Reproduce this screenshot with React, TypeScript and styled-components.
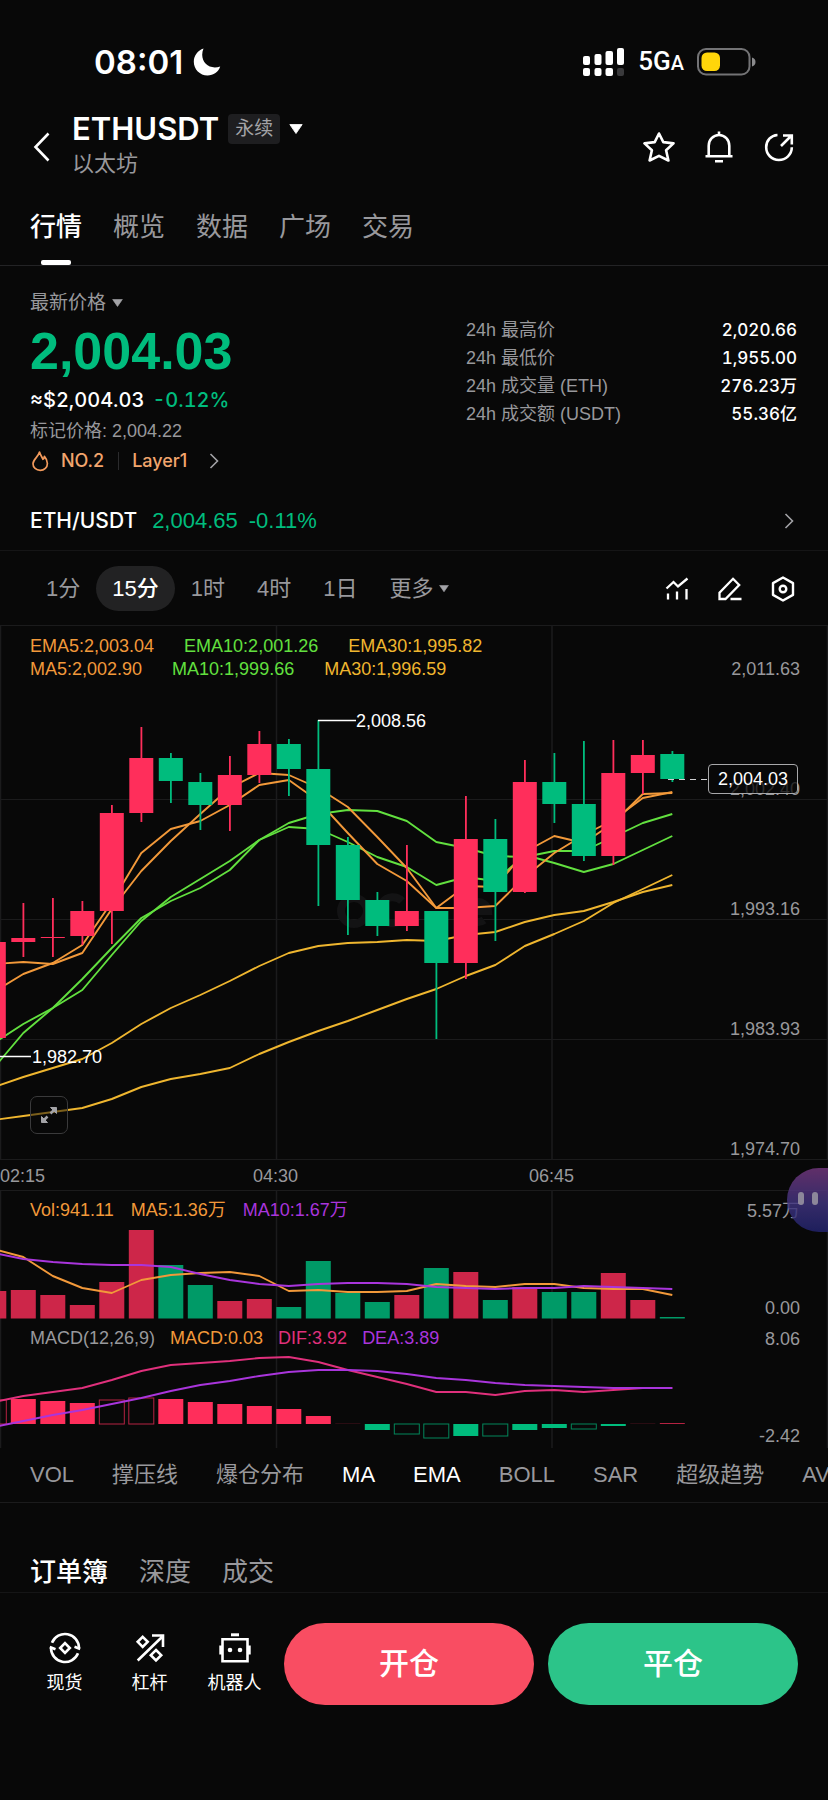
import React from "react";
import styled, { createGlobalStyle } from "styled-components";

const UP = "#ff2e5b";
const DOWN = "#00bc7d";
const ORANGE = "#f2993a";
const GREEN = "#62e03f";
const YELLOW = "#efb62f";
const PURPLE = "#a935dc";
const PINK = "#e0307c";
const GRID = "#1b1b1c";
const MUTED = "#98989c";

const DISPLAY = `Inter, "Noto Sans CJK SC", sans-serif`;

const GlobalStyle = createGlobalStyle`
  *, *::before, *::after { box-sizing: border-box; }
  body {
    margin: 0;
    background: #080808;
    color: #fff;
    font-family: "Liberation Sans", "Noto Sans CJK SC", sans-serif;
    -webkit-font-smoothing: antialiased;
  }
  button {
    font: inherit;
    color: inherit;
    background: none;
    border: 0;
    padding: 0;
    cursor: pointer;
  }
  a { color: inherit; text-decoration: none; }
  svg { display: block; flex: none; }
`;

const Page = styled.main`
  display: flex;
  flex-direction: column;
  min-height: 100vh;
  overflow: hidden;
  padding-bottom: 94px;
`;

/* ---------- status bar ---------- */

const StatusBar = styled.div`
  display: flex;
  align-items: center;
  justify-content: space-between;
  padding: 42px 72px 14px 94px;
  height: 96px;
`;

const StatusGroup = styled.div<{ $gap: number }>`
  display: flex;
  align-items: center;
  gap: ${(p) => p.$gap}px;
`;

const Clock = styled.span`
  font-family: ${DISPLAY};
  font-size: 33px;
  line-height: 40px;
  font-weight: 600;
`;

const Network = styled.span`
  font-family: Roboto, sans-serif;
  font-size: 26px;
  line-height: 32px;
  font-weight: 500;
  small { font-size: 20px; }
`;

/* ---------- header ---------- */

const Header = styled.header`
  display: flex;
  align-items: flex-end;
  padding: 12px 33px 0 31px;
`;

const BackButton = styled.button`
  width: 41px;
  padding-bottom: 16px;
`;

const PairBlock = styled.div`
  flex: 1;
  display: flex;
  flex-direction: column;
`;

const PairButton = styled.button`
  display: flex;
  align-items: center;
  gap: 9px;
  height: 42px;
`;

const PairName = styled.span`
  font-family: ${DISPLAY};
  font-size: 31px;
  line-height: 40px;
  font-weight: 600;
`;

const Badge = styled.span`
  padding: 0 7px;
  border-radius: 4px;
  background: #1e1e20;
  color: #a3a3a7;
  font-size: 19px;
  line-height: 30px;
`;

const CoinName = styled.span`
  color: ${MUTED};
  font-size: 22px;
  line-height: 28px;
`;

const HeaderActions = styled.div`
  display: flex;
  gap: 28px;
  padding-bottom: 15px;
`;

/* ---------- tabs ---------- */

const Tabs = styled.nav<{ $line: string; $pad: string }>`
  display: flex;
  gap: 31px;
  padding: ${(p) => p.$pad};
  border-bottom: 1px solid ${(p) => p.$line};
`;

const Tab = styled.button<{ $active?: boolean; $bar?: boolean }>`
  position: relative;
  font-size: 26px;
  line-height: 36px;
  padding-bottom: ${(p) => (p.$bar ? 20 : 2)}px;
  font-weight: ${(p) => (p.$active ? 500 : 400)};
  color: ${(p) => (p.$active ? "#fff" : MUTED)};
  &::after {
    content: "";
    display: ${(p) => (p.$active && p.$bar ? "block" : "none")};
    position: absolute;
    left: calc(50% - 15px);
    bottom: 0;
    width: 30px;
    height: 5px;
    border-radius: 2px;
    background: #fff;
  }
`;

/* ---------- quote ---------- */

const Quote = styled.section`
  display: flex;
  justify-content: space-between;
  align-items: flex-start;
  padding: 21px 31px 0 30px;
`;

const QuoteMain = styled.div`
  display: flex;
  flex-direction: column;
  align-items: flex-start;
`;

const PriceKind = styled.button`
  display: flex;
  align-items: center;
  gap: 6px;
  color: ${MUTED};
  font-size: 19px;
  line-height: 32px;
`;

const LastPrice = styled.strong`
  color: ${DOWN};
  font-size: 52px;
  line-height: 64px;
  font-weight: 700;
`;

const FiatRow = styled.div`
  display: flex;
  gap: 8px;
  font-family: ${DISPLAY};
  font-size: 20px;
  line-height: 34px;
  font-weight: 500;
  font-variant-numeric: tabular-nums;
`;

const Change = styled.span`
  color: ${DOWN};
`;

const MarkPrice = styled.div`
  color: ${MUTED};
  font-size: 18px;
  line-height: 28px;
`;

const TagRow = styled.a`
  display: flex;
  align-items: center;
  color: #f2a56d;
  font-family: ${DISPLAY};
  font-size: 18px;
  line-height: 32px;
  font-weight: 500;
`;

const TagText = styled.span`
  margin-left: 11px;
`;

const TagDivider = styled.span`
  width: 1px;
  height: 18px;
  margin: 0 2px 0 14px;
  background: #2b2b2d;
`;

const TagArrow = styled.span`
  margin-left: 21px;
`;

const Stats = styled.dl`
  display: grid;
  grid-template-columns: auto auto;
  width: 331px;
  margin: 0;
  padding-top: 29px;
  font-size: 18px;
  line-height: 28px;
  dt { color: ${MUTED}; }
  dd {
    margin: 0;
    text-align: right;
    font-family: ${DISPLAY};
    font-size: 17px;
    font-weight: 500;
    font-variant-numeric: tabular-nums;
  }
`;

const SpotLink = styled.a`
  display: flex;
  align-items: center;
  gap: 11px;
  padding: 27px 33px 12px 30px;
  border-bottom: 1px solid #151516;
  font-size: 22px;
  line-height: 34px;
  b {
    margin-right: 4px;
    font-family: ${DISPLAY};
    font-size: 21px;
    font-weight: 500;
  }
  svg { margin-left: auto; }
`;

/* ---------- timeframe ---------- */

const Toolbar = styled.div`
  display: flex;
  align-items: center;
  justify-content: space-between;
  padding: 15px 33px 14px 30px;
`;

const Frames = styled.div`
  display: flex;
  align-items: center;
`;

const Frame = styled.button<{ $active?: boolean }>`
  display: flex;
  align-items: center;
  gap: 5px;
  height: 45px;
  padding: 0 16px;
  border-radius: 23px;
  font-size: 22px;
  line-height: 32px;
  font-weight: ${(p) => (p.$active ? 500 : 400)};
  color: ${(p) => (p.$active ? "#fff" : MUTED)};
  background: ${(p) => (p.$active ? "#222223" : "transparent")};
`;

const Tools = styled.div`
  display: flex;
  gap: 28px;
`;

/* ---------- chart ---------- */

const Chart = styled.section`
  position: relative;
`;

const Pane = styled.div<{ $height: number }>`
  position: relative;
  height: ${(p) => p.$height}px;
  > svg {
    width: 100%;
    height: 100%;
  }
`;

const Legend = styled.div<{ $gap: number; $top: number }>`
  position: absolute;
  top: ${(p) => p.$top}px;
  left: 30px;
  display: grid;
  grid-auto-rows: 23px;
  font-size: 18px;
  line-height: 23px;
  > div {
    display: flex;
    gap: ${(p) => p.$gap}px;
  }
`;

const LegendItem = styled.span<{ $color: string }>`
  color: ${(p) => p.$color};
`;

const PriceAxis = styled.div<{ $top: number; $pitch: number }>`
  position: absolute;
  top: ${(p) => p.$top}px;
  right: 28px;
  display: grid;
  grid-auto-rows: ${(p) => p.$pitch}px;
  color: ${MUTED};
  font-size: 18px;
  line-height: 24px;
  text-align: right;
`;

const CurrentPrice = styled.span`
  position: absolute;
  top: 139px;
  right: 30px;
  padding: 0 9px;
  border: 1px solid #a8a8aa;
  border-radius: 4px;
  background: rgba(8, 8, 8, 0.75);
  font-size: 18px;
  line-height: 28px;
`;

const Extreme = styled.span<{ $left: string; $top: number }>`
  position: absolute;
  left: ${(p) => p.$left};
  top: ${(p) => p.$top}px;
  font-size: 18px;
  line-height: 24px;
`;

const ExpandButton = styled.button`
  position: absolute;
  left: 30px;
  bottom: 26px;
  display: grid;
  place-items: center;
  width: 38px;
  height: 38px;
  border: 1px solid #3a3a3b;
  border-radius: 7px;
  background: rgba(8, 8, 8, 0.5);
`;

const TimeAxis = styled.div`
  display: grid;
  grid-template-columns: 1fr 1fr 1fr;
  height: 30px;
  color: ${MUTED};
  font-size: 18px;
  line-height: 32px;
  span + span { margin-left: -23px; }
`;

const Assistant = styled.button`
  position: absolute;
  right: 0;
  top: 543px;
  display: flex;
  align-items: center;
  gap: 8px;
  width: 41px;
  height: 64px;
  padding: 0 0 3px 11px;
  border-radius: 32px 0 0 32px;
  background: linear-gradient(#74387f, #40347f 55%, #23246f);
  opacity: 0.82;
`;

const Eye = styled.i`
  width: 6px;
  height: 13px;
  border-radius: 3px;
  background: #aaa3bb;
`;

/* ---------- indicators ---------- */

const Indicators = styled.nav`
  display: flex;
  gap: 38px;
  padding: 10px 0 10px 30px;
  border-bottom: 1px solid #1b1b1c;
  overflow: hidden;
`;

const Indicator = styled.button<{ $active?: boolean }>`
  flex: none;
  font-size: 22px;
  line-height: 34px;
  color: ${(p) => (p.$active ? "#fff" : MUTED)};
`;

/* ---------- bottom bar ---------- */

const BottomBar = styled.footer`
  display: flex;
  align-items: center;
  padding: 30px 30px 0 22px;
`;

const Shortcut = styled.button`
  display: flex;
  flex-direction: column;
  align-items: center;
  gap: 6px;
  width: 85px;
  font-size: 18px;
  line-height: 26px;
`;

const Actions = styled.div`
  flex: 1;
  display: grid;
  grid-template-columns: 1fr 1fr;
  gap: 14px;
  margin-left: 7px;
`;

const TradeButton = styled.button<{ $color: string }>`
  height: 82px;
  border-radius: 41px;
  background: ${(p) => p.$color};
  font-size: 30px;
  line-height: 40px;
  font-weight: 500;
`;

/* ---------- icons ---------- */

const Caret = ({ w, color }: { w: number; color: string }) => (
  <svg width={w} height={w * 0.7} viewBox="0 0 10 7">
    <path d="M.6.4h8.8L5 6.8z" fill={color} stroke={color} strokeWidth=".6" strokeLinejoin="round" />
  </svg>
);

const ChevronRight = () => (
  <svg width="12" height="18" viewBox="0 0 12 18" fill="none" stroke="#a3a3a7" strokeWidth="1.6">
    <path d="M2.5 2l7 7-7 7" />
  </svg>
);

const line = { fill: "none", stroke: "#fff", strokeWidth: 2.6 } as const;

const Moon = () => (
  <svg width="28" height="28" viewBox="0 0 28 28">
    <path d="M10.5.6C5 2.4.8 7.500.8 13.700.8 21.300 6.900 27.400 14.500 27.400c6 0 11-3.600 12.700-9-1.900.7-3.500 1-5.400 1C14.600 19.400 9.200 14 9.200 6.800 9.200 4.600 9.700 2.500 10.500.6z" fill="#fff" />
  </svg>
);

const Signal = () => (
  <svg width="42" height="30" viewBox="0 0 42 30" fill="#fff">
    <rect x="0" y="9" width="7" height="9" rx="2" />
    <rect x="11.500" y="7" width="7" height="11" rx="2" />
    <rect x="22.500" y="4" width="7.500" height="14" rx="2" />
    <rect x="34" y="1" width="7" height="17" rx="2" />
    <rect x="0" y="21" width="7" height="8" rx="2" />
    <rect x="11.500" y="21" width="7" height="8" rx="2" />
    <rect x="22.500" y="21" width="7.500" height="8" rx="2" />
    <rect x="34" y="21" width="7" height="8" rx="2" fill="#3a3a3c" />
  </svg>
);

const Battery = () => (
  <svg width="59" height="28" viewBox="0 0 59 28">
    <rect x="1" y="1" width="51.500" height="25.500" rx="8" fill="none" stroke="#737375" strokeWidth="2" />
    <rect x="4.500" y="4.500" width="18.500" height="18.500" rx="5.500" fill="#ffd60a" />
    <path d="M55 9.500c2.500.6 3.500 2.400 3.500 4.500s-1 3.900-3.500 4.500z" fill="#8a8a8c" />
  </svg>
);

const Star = () => (
  <svg width="32" height="32" viewBox="0 0 32 32" {...line} strokeLinejoin="round">
    <path d="M16 2.500l4.300 8.600 10.200 1.300-7.400 6.800 2.300 10.300L16 24.800l-9.400 4.700 2.300-10.300-7.400-6.800 10.200-1.300z" />
  </svg>
);

const Bell = () => (
  <svg width="32" height="32" viewBox="0 0 32 32" {...line}>
    <path d="M16 .6v4M5.700 25V14.700C5.700 8.800 10.200 4 16 4s10.300 4.800 10.300 10.700V25M2.500 25.200h27M12 30.200h8" />
  </svg>
);

const Share = () => (
  <svg width="32" height="32" viewBox="0 0 32 32" {...line}>
    <path d="M14.500 4C8 4.300 3.200 9.500 3.200 16.300 3.200 23.300 8.700 29 15.800 29c7.200 0 13-5.600 13-12.700M18 15L28 5M20 4.500h8.800v9" />
  </svg>
);

const IndicatorIcon = () => (
  <svg width="24" height="24" viewBox="0 0 24 24" {...line} strokeWidth="2.300">
    <path d="M1.500 11.500l7-6.500 4.500 4.500L22.500 1.500M3 16.500v6M12 14.500v8M21.500 12v10.500" />
  </svg>
);

const Pencil = () => (
  <svg width="26" height="24" viewBox="0 0 26 24" {...line} strokeWidth="2.300">
    <path d="M16 1.800l6.200 6.200L8.500 22H2.500v-6.200zM13.500 22h11" />
  </svg>
);

const Hexagon = () => (
  <svg width="24" height="26" viewBox="0 0 24 26" {...line} strokeWidth="2.400">
    <path d="M12 1.500l10 5.600v11.800l-10 5.600-10-5.600V7.100z" strokeLinejoin="round" />
    <circle cx="12" cy="13" r="3.300" />
  </svg>
);

const Flame = () => (
  <svg width="20" height="22" viewBox="0 0 20 22" fill="none" stroke="#f29a5c" strokeWidth="1.700" strokeLinejoin="round">
    <path d="M9.500 2c.8 3.200 2.600 4.700 3.400 7.300.9-.5 1.400-1.500 1.500-2.900 2.200 2.500 3 4.700 3 7 0 4.100-3.100 7-7.200 7S3 17.500 3 13.700C3 9.300 8.400 7 9.500 2z" />
  </svg>
);

const SpotIcon = () => (
  <svg width="32" height="32" viewBox="0 0 32 32" {...line}>
    <path d="M3 10.800A14 14 0 0 1 30 16M29 21.200A14 14 0 0 1 2 16" />
    <path d="M31.200 17L25.500 14.800M.8 15L6.500 17.200" />
    <path d="M16 11.200l4.800 4.800-4.800 4.800-4.800-4.800z" />
  </svg>
);

const LeverageIcon = () => (
  <svg width="32" height="32" viewBox="0 0 32 32" {...line}>
    <path d="M3.700 28.500L28.500 4.500M18 3.500H29V15M8.700 4.800l5 5-5 5-5-5zM22 18l5.200 5.200L22 28.400l-5.200-5.200z" />
  </svg>
);

const RobotIcon = () => (
  <svg width="32" height="32" viewBox="0 0 32 32" {...line}>
    <path d="M3.500 7.300h25v22h-25zM1.600 13.500v9M30.400 13.500v9" />
    <path d="M12 2.800h8" strokeWidth="3" />
    <circle cx="11" cy="18" r="2.300" fill="#fff" stroke="none" />
    <circle cx="21" cy="18" r="2.300" fill="#fff" stroke="none" />
  </svg>
);

/* ---------- chart data: all panes share one vertical scale ---------- */

const STEP = 29.5;
const xAt = (i: number) => -6.2 + STEP * i;

// [rising, high, body top, body bottom, low]
const candles: [number, number, number, number, number][] = [
  [1, 942, 942, 1038, 1038],
  [1, 903, 938, 942, 957],
  [1, 898, 937, 938, 957],
  [1, 901, 911, 936, 945],
  [1, 805, 813, 911, 944],
  [1, 727, 758, 813, 822],
  [0, 753, 758, 781, 803],
  [0, 773, 782, 805, 830],
  [1, 756, 775, 805, 831],
  [1, 731, 744, 775, 783],
  [0, 739, 744, 769, 796],
  [0, 720, 769, 845, 906],
  [0, 837, 845, 900, 935],
  [0, 892, 900, 926, 936],
  [1, 845, 911, 926, 931],
  [0, 911, 911, 963, 1039],
  [1, 796, 839, 963, 979],
  [0, 819, 839, 892, 941],
  [1, 760, 782, 892, 893],
  [0, 753, 782, 804, 823],
  [0, 741, 804, 856, 861],
  [1, 740, 773, 856, 865],
  [1, 740, 755, 773, 794],
  [0, 751, 754, 779, 782],
];

const averages: { color: string; ys: number[] }[] = [
  { color: YELLOW, ys: [1087, 1077, 1068, 1059, 1043, 1024, 1008, 995, 981, 966, 953, 946, 943, 942, 940, 941, 935, 932, 922, 915, 911, 902, 892, 885] },
  { color: YELLOW, ys: [1120, 1116, 1112, 1108, 1099, 1087, 1079, 1074, 1068, 1054, 1042, 1031, 1021, 1010, 999, 989, 976, 965, 946, 934, 921, 903, 889, 875] },
  { color: GREEN, ys: [1043, 1024, 1008, 990, 955, 921, 897, 879, 861, 840, 827, 829, 842, 857, 867, 885, 877, 881, 855, 863, 872, 864, 850, 836] },
  { color: GREEN, ys: [1068, 1033, 1008, 979, 948, 918, 901, 888, 870, 840, 823, 814, 810, 811, 821, 842, 848, 856, 857, 851, 851, 837, 823, 814] },
  { color: ORANGE, ys: [964, 962, 964, 953, 909, 871, 841, 814, 788, 773, 775, 788, 807, 837, 868, 908, 908, 906, 877, 853, 835, 820, 798, 792] },
  { color: ORANGE, ys: [992, 974, 963, 945, 902, 853, 829, 821, 805, 785, 780, 801, 833, 864, 881, 908, 886, 887, 852, 836, 843, 823, 794, 793] },
];

// [rising, bar top]
const volumes: [number, number][] = [
  [1, 1291], [1, 1290], [1, 1295], [1, 1305], [1, 1282], [1, 1230], [0, 1265], [0, 1285],
  [1, 1301], [1, 1299], [0, 1307], [0, 1261], [0, 1293], [0, 1302], [1, 1295], [0, 1268],
  [1, 1272], [0, 1300], [1, 1287], [0, 1292], [0, 1292], [1, 1273], [1, 1300], [0, 1317],
];
const volMa5 = [1249, 1257, 1276, 1288, 1293, 1280, 1275, 1273, 1272, 1276, 1291, 1290, 1292, 1292, 1291, 1284, 1286, 1287, 1284, 1284, 1288, 1289, 1289, 1295];
const volMa10 = [1253, 1259, 1262, 1264, 1265, 1265, 1267, 1274, 1280, 1284, 1286, 1284, 1283, 1283, 1284, 1287, 1288, 1289, 1288, 1288, 1286, 1287, 1288, 1289];

// [histogram end, hollow]
const ZERO = 1424;
const histogram: [number, number][] = [
  [1400, 1], [1399, 0], [1401, 0], [1403, 0], [1400, 1], [1398, 1], [1399, 0], [1402, 0],
  [1404, 0], [1406, 0], [1409, 0], [1416, 0], [1423.8, 0], [1430, 0], [1434, 1], [1438, 1],
  [1436, 0], [1436, 1], [1430, 0], [1428, 0], [1429, 1], [1426, 0], [1423.8, 0], [1423, 0],
];
const dif = [1402, 1396, 1392, 1388, 1380, 1371, 1365, 1363, 1361, 1358, 1357, 1362, 1370, 1377, 1384, 1392, 1392, 1395, 1391, 1390, 1392, 1390, 1388, 1388];
const dea = [1427, 1421, 1415, 1410, 1404, 1398, 1391, 1385, 1381, 1376, 1372, 1370, 1370, 1371, 1374, 1378, 1380, 1383, 1385, 1386, 1387, 1388, 1388, 1388];

const Curve = ({ ys, color }: { ys: number[]; color: string }) => (
  <polyline
    points={ys.map((y, i) => `${xAt(i)},${y}`).join(" ")}
    fill="none"
    stroke={color}
    strokeWidth="1.9"
    strokeLinejoin="round"
  />
);

const VerticalGrid = ({ from, to }: { from: number; to: number }) => (
  <path
    d={[0.5, 276.5, 552, 827.5].map((x) => `M${x} ${from}V${to}`).join("")}
    stroke={GRID}
    strokeWidth="1.500"
  />
);

const CandlePane = () => (
  <svg viewBox="0 625 828 535" preserveAspectRatio="none" role="img" aria-label="ETHUSDT K线">
    <path d="M0 625.5H828M0 799.5H828M0 919.5H828M0 1039.5H828M0 1159.5H828" stroke={GRID} />
    <VerticalGrid from={625} to={1160} />
    <g fill="none" stroke="#131314" strokeWidth="8">
      <circle cx="354" cy="911" r="13" />
      <path d="M402 901a13 13 0 1 0 3 14h-10M470 911h18a10 10 0 1 0-4 9" />
    </g>
    {averages.map((a, i) => (
      <Curve key={i} {...a} />
    ))}
    {candles.map(([up, high, top, bottom, low], i) => (
      <g key={i} fill={up ? UP : DOWN}>
        <rect x={xAt(i) - 0.8} y={high} width="1.800" height={low - high} />
        <rect x={xAt(i) - 12} y={top} width="24" height={bottom - top} />
      </g>
    ))}
    <path d="M318 720.5H356M0 1056.500H31" stroke="#fff" strokeWidth="1.500" />
    <path d="M668 779.5H708" stroke="#d0d0d2" strokeWidth="1.200" strokeDasharray="6 5" />
  </svg>
);

const VolumePane = () => (
  <svg viewBox="0 1190 828 130" preserveAspectRatio="none" role="img" aria-label="成交量">
    <path d="M0 1190.5H828" stroke={GRID} />
    <VerticalGrid from={1190} to={1320} />
    {volumes.map(([up, top], i) => (
      <rect key={i} x={xAt(i) - 12.5} y={top} width="25" height={1318.5 - top} fill={up ? "#cd2649" : "#009a67"} />
    ))}
    <Curve ys={volMa5} color={ORANGE} />
    <Curve ys={volMa10} color={PURPLE} />
  </svg>
);

const MacdPane = () => (
  <svg viewBox="0 1320 828 128" preserveAspectRatio="none" role="img" aria-label="MACD">
    <VerticalGrid from={1320} to={1448} />
    {histogram.map(([end, hollow], i) => {
      const color = end < ZERO ? UP : DOWN;
      const y = Math.min(end, ZERO);
      const h = Math.abs(end - ZERO);
      return (
        <rect
          key={i}
          x={xAt(i) - 12.5}
          y={y}
          width="25"
          height={h}
          fill={hollow ? "none" : color}
          stroke={hollow ? color : "none"}
          opacity={hollow || h <= 1 ? 0.7 : 1}
        />
      );
    })}
    <Curve ys={dif} color={PINK} />
    <Curve ys={dea} color={PURPLE} />
  </svg>
);

const stats = [
  ["24h 最高价", "2,020.66"],
  ["24h 最低价", "1,955.00"],
  ["24h 成交量 (ETH)", "276.23万"],
  ["24h 成交额 (USDT)", "55.36亿"],
];

export default function App() {
  return (
    <>
      <GlobalStyle />
      <Page>
        <StatusBar>
          <StatusGroup $gap={10}>
            <Clock>08:01</Clock>
            <Moon />
          </StatusGroup>
          <StatusGroup $gap={13}>
            <Signal />
            <Network>5G<small>A</small></Network>
            <Battery />
          </StatusGroup>
        </StatusBar>

        <Header>
          <BackButton aria-label="返回">
            <svg width="20" height="30" viewBox="0 0 20 30" {...line}>
              <path d="M17.500 1.500L4.500 15l13 13.500" />
            </svg>
          </BackButton>
          <PairBlock>
            <PairButton>
              <PairName>ETHUSDT</PairName>
              <Badge>永续</Badge>
              <Caret w={14} color="#fff" />
            </PairButton>
            <CoinName>以太坊</CoinName>
          </PairBlock>
          <HeaderActions>
            <button aria-label="收藏"><Star /></button>
            <button aria-label="提醒"><Bell /></button>
            <button aria-label="分享"><Share /></button>
          </HeaderActions>
        </Header>

        <Tabs $line="#232325" $pad="31px 30px 0">
          {["行情", "概览", "数据", "广场", "交易"].map((t, i) => (
            <Tab key={t} $active={i === 0} $bar>{t}</Tab>
          ))}
        </Tabs>

        <Quote>
          <QuoteMain>
            <PriceKind>最新价格 <Caret w={11} color="#a3a3a7" /></PriceKind>
            <LastPrice>2,004.03</LastPrice>
            <FiatRow><span>≈$2,004.03</span><Change>-0.12%</Change></FiatRow>
            <MarkPrice>标记价格: 2,004.22</MarkPrice>
            <TagRow href="#rank">
              <Flame />
              <TagText>NO.2</TagText>
              <TagDivider />
              <TagText>Layer1</TagText>
              <TagArrow><ChevronRight /></TagArrow>
            </TagRow>
          </QuoteMain>
          <Stats>
            {stats.map(([label, value]) => (
              <React.Fragment key={label}>
                <dt>{label}</dt>
                <dd>{value}</dd>
              </React.Fragment>
            ))}
          </Stats>
        </Quote>

        <SpotLink href="#spot">
          <b>ETH/USDT</b>
          <Change>2,004.65</Change>
          <Change>-0.11%</Change>
          <ChevronRight />
        </SpotLink>

        <Toolbar>
          <Frames>
            <Frame>1分</Frame>
            <Frame $active>15分</Frame>
            <Frame>1时</Frame>
            <Frame>4时</Frame>
            <Frame>1日</Frame>
            <Frame>更多 <Caret w={10} color="#a3a3a7" /></Frame>
          </Frames>
          <Tools>
            <button aria-label="指标"><IndicatorIcon /></button>
            <button aria-label="画线"><Pencil /></button>
            <button aria-label="设置"><Hexagon /></button>
          </Tools>
        </Toolbar>

        <Chart>
          <Pane $height={535}>
            <CandlePane />
            <Legend $gap={30} $top={10}>
              <div>
                <LegendItem $color={ORANGE}>EMA5:2,003.04</LegendItem>
                <LegendItem $color={GREEN}>EMA10:2,001.26</LegendItem>
                <LegendItem $color={YELLOW}>EMA30:1,995.82</LegendItem>
              </div>
              <div>
                <LegendItem $color={ORANGE}>MA5:2,002.90</LegendItem>
                <LegendItem $color={GREEN}>MA10:1,999.66</LegendItem>
                <LegendItem $color={YELLOW}>MA30:1,996.59</LegendItem>
              </div>
            </Legend>
            <PriceAxis $top={32} $pitch={120}>
              <span>2,011.63</span>
              <span>2,002.40</span>
              <span>1,993.16</span>
              <span>1,983.93</span>
            </PriceAxis>
            <PriceAxis $top={512} $pitch={24}>
              <span>1,974.70</span>
            </PriceAxis>
            <CurrentPrice>2,004.03</CurrentPrice>
            <Extreme $left="43%" $top={84}>2,008.56</Extreme>
            <Extreme $left="32px" $top={420}>1,982.70</Extreme>
            <ExpandButton aria-label="全屏">
              <svg width="18" height="18" viewBox="0 0 18 18" fill="#a3a3a7" stroke="#a3a3a7" strokeWidth="2.500">
                <path d="M10.500 1.500h6v6zM1.500 10.500v6h6z" strokeWidth="1" />
                <path d="M10.500 7.500l4-4M3.500 14.500l4-4" />
              </svg>
            </ExpandButton>
          </Pane>
          <TimeAxis>
            <span>02:15</span>
            <span>04:30</span>
            <span>06:45</span>
          </TimeAxis>
          <Pane $height={130}>
            <VolumePane />
            <Legend $gap={17} $top={9}>
              <div>
                <LegendItem $color={ORANGE}>Vol:941.11</LegendItem>
                <LegendItem $color={ORANGE}>MA5:1.36万</LegendItem>
                <LegendItem $color={PURPLE}>MA10:1.67万</LegendItem>
              </div>
            </Legend>
            <PriceAxis $top={9} $pitch={97}>
              <span>5.57万</span>
              <span>0.00</span>
            </PriceAxis>
          </Pane>
          <Pane $height={128}>
            <MacdPane />
            <Legend $gap={15} $top={7}>
              <div>
                <LegendItem $color={MUTED}>MACD(12,26,9)</LegendItem>
                <LegendItem $color={ORANGE}>MACD:0.03</LegendItem>
                <LegendItem $color={PINK}>DIF:3.92</LegendItem>
                <LegendItem $color={PURPLE}>DEA:3.89</LegendItem>
              </div>
            </Legend>
            <PriceAxis $top={7} $pitch={97}>
              <span>8.06</span>
              <span>-2.42</span>
            </PriceAxis>
          </Pane>
          <Assistant aria-label="助手">
            <Eye />
            <Eye />
          </Assistant>
        </Chart>

        <Indicators>
          {["VOL", "撑压线", "爆仓分布", "MA", "EMA", "BOLL", "SAR", "超级趋势", "AVL"].map((t) => (
            <Indicator key={t} $active={t === "MA" || t === "EMA"}>{t}</Indicator>
          ))}
        </Indicators>

        <Tabs $line="#151516" $pad="51px 30px 0">
          <Tab $active>订单簿</Tab>
          <Tab>深度</Tab>
          <Tab>成交</Tab>
        </Tabs>

        <BottomBar>
          <Shortcut><SpotIcon />现货</Shortcut>
          <Shortcut><LeverageIcon />杠杆</Shortcut>
          <Shortcut><RobotIcon />机器人</Shortcut>
          <Actions>
            <TradeButton $color="#f94d62">开仓</TradeButton>
            <TradeButton $color="#2cc489">平仓</TradeButton>
          </Actions>
        </BottomBar>
      </Page>
    </>
  );
}
